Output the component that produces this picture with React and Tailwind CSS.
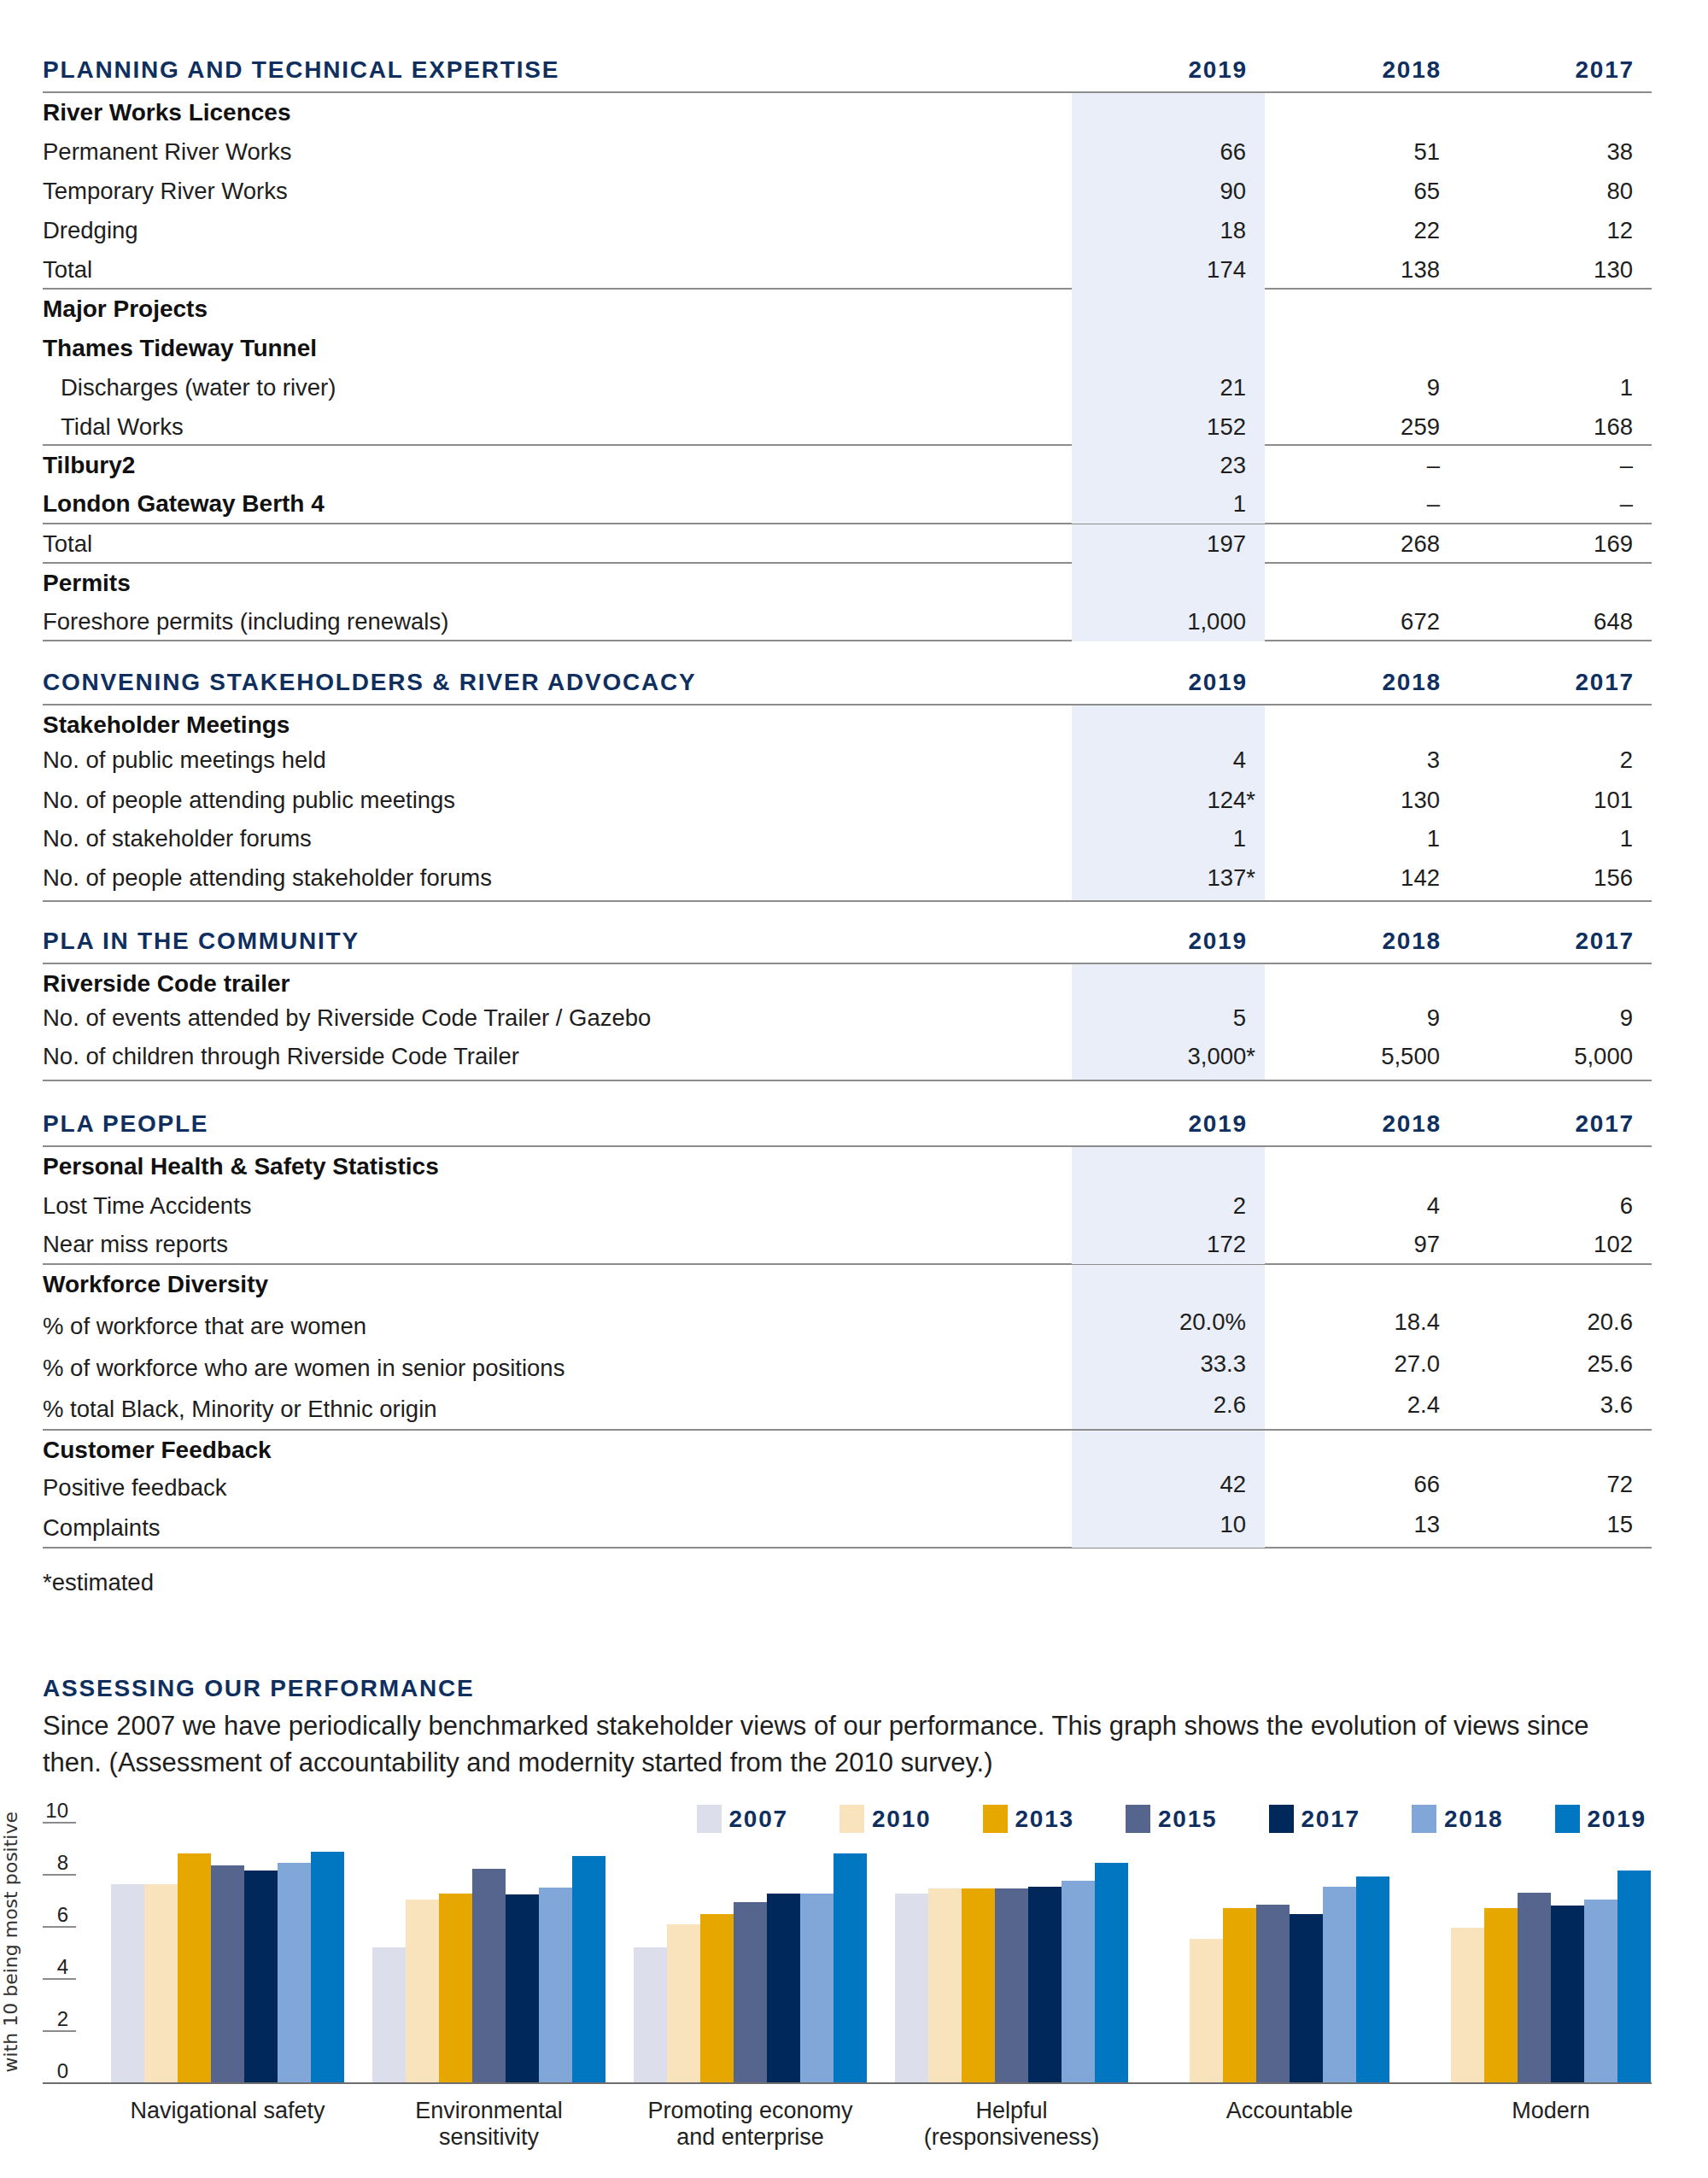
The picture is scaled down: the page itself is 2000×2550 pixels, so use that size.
import React from 'react';

const COLS = 'grid grid-cols-[1205px_226px_227px_226px]';

const sections = [
  {
    title: 'PLANNING AND TECHNICAL EXPERTISE',
    mt: '',
    groups: [
      [
        { label: 'River Works Licences', bold: true, h: 'h-[46px]' },
        { label: 'Permanent River Works', v: ['66', '51', '38'], h: 'h-[46px]' },
        { label: 'Temporary River Works', v: ['90', '65', '80'], h: 'h-[46px]' },
        { label: 'Dredging', v: ['18', '22', '12'], h: 'h-[46px]' },
        { label: 'Total', v: ['174', '138', '130'], h: 'h-[44px]' },
      ],
      [
        { label: 'Major Projects', bold: true, h: 'h-[46px]' },
        { label: 'Thames Tideway Tunnel', bold: true, h: 'h-[46px]' },
        { label: 'Discharges (water to river)', indent: true, v: ['21', '9', '1'], h: 'h-[46px]' },
        { label: 'Tidal Works', indent: true, v: ['152', '259', '168'], h: 'h-[43px]' },
      ],
      [
        { label: 'Tilbury2', bold: true, v: ['23', '–', '–'], h: 'h-[45px]' },
        { label: 'London Gateway Berth 4', bold: true, v: ['1', '–', '–'], h: 'h-[45px]' },
      ],
      [{ label: 'Total', v: ['197', '268', '169'], h: 'h-[44px]' }],
      [
        { label: 'Permits', bold: true, h: 'h-[45px]' },
        { label: 'Foreshore permits (including renewals)', v: ['1,000', '672', '648'], h: 'h-[44px]' },
      ],
    ],
  },
  {
    title: 'CONVENING STAKEHOLDERS & RIVER ADVOCACY',
    mt: 'mt-[34px]',
    groups: [
      [
        { label: 'Stakeholder Meetings', bold: true, h: 'h-[41px]' },
        { label: 'No. of public meetings held', v: ['4', '3', '2'], h: 'h-[47px]' },
        { label: 'No. of people attending public meetings', v: ['124*', '130', '101'], h: 'h-[45px]' },
        { label: 'No. of stakeholder forums', v: ['1', '1', '1'], h: 'h-[46px]' },
        { label: 'No. of people attending stakeholder forums', v: ['137*', '142', '156'], h: 'h-[49px]' },
      ],
    ],
  },
  {
    title: 'PLA IN THE COMMUNITY',
    mt: 'mt-[32px]',
    groups: [
      [
        { label: 'Riverside Code trailer', bold: true, h: 'h-[40px]' },
        { label: 'No. of events attended by Riverside Code Trailer / Gazebo', v: ['5', '9', '9'], h: 'h-[45px]' },
        { label: 'No. of children through Riverside Code Trailer', v: ['3,000*', '5,500', '5,000'], h: 'h-[50px]' },
      ],
    ],
  },
  {
    title: 'PLA PEOPLE',
    mt: 'mt-[36px]',
    groups: [
      [
        { label: 'Personal Health & Safety Statistics', bold: true, h: 'h-[46px]' },
        { label: 'Lost Time Accidents', v: ['2', '4', '6'], h: 'h-[45px]' },
        { label: 'Near miss reports', v: ['172', '97', '102'], h: 'h-[45px]' },
      ],
      [
        { label: 'Workforce Diversity', bold: true, h: 'h-[49px]' },
        { label: '% of workforce that are women', v: ['20.0%', '18.4', '20.6'], h: 'h-[49px]', vl: 'leading-[36px]' },
        { label: '% of workforce who are women in senior positions', v: ['33.3', '27.0', '25.6'], h: 'h-[48px]', vl: 'leading-[36px]' },
        { label: '% total Black, Minority or Ethnic origin', v: ['2.6', '2.4', '3.6'], h: 'h-[46px]', vl: 'leading-[36px]' },
      ],
      [
        { label: 'Customer Feedback', bold: true, h: 'h-[44px]' },
        { label: 'Positive feedback', v: ['42', '66', '72'], h: 'h-[47px]', vl: 'leading-[38px]' },
        { label: 'Complaints', v: ['10', '13', '15'], h: 'h-[45px]', vl: 'leading-[38px]' },
      ],
    ],
  },
];

const series = [
  { year: '2007', color: 'bg-[#dcdfeb]' },
  { year: '2010', color: 'bg-[#f9e3bc]' },
  { year: '2013', color: 'bg-[#e6a800]' },
  { year: '2015', color: 'bg-[#56658e]' },
  { year: '2017', color: 'bg-[#00285a]' },
  { year: '2018', color: 'bg-[#80a7d8]' },
  { year: '2019', color: 'bg-[#0077c0]' },
];

// values read off the survey chart, 0-10 scale; null = not assessed that year
const chartGroups = [
  { label: ['Navigational safety'], v: [7.62, 7.62, 8.8, 8.33, 8.14, 8.43, 8.88] },
  { label: ['Environmental', 'sensitivity'], v: [5.18, 7.04, 7.26, 8.23, 7.23, 7.48, 8.72] },
  { label: ['Promoting economy', 'and enterprise'], v: [5.18, 6.09, 6.48, 6.93, 7.25, 7.26, 8.82] },
  { label: ['Helpful', '(responsiveness)'], v: [7.25, 7.45, 7.45, 7.45, 7.51, 7.75, 8.43] },
  { label: ['Accountable'], v: [null, 5.53, 6.69, 6.83, 6.48, 7.51, 7.93] },
  { label: ['Modern'], v: [null, 5.95, 6.69, 7.29, 6.8, 7.04, 8.16] },
];

const Value = ({ v }) => {
  if (v.endsWith('*')) {
    return (
      <span>
        {v.slice(0, -1)}
        <span className="-mr-[11px]">*</span>
      </span>
    );
  }
  return <span>{v}</span>;
};

const Row = ({ row }) => {
  const vals = row.v || ['', '', ''];
  return (
    <div className={`${COLS} ${row.h}`}>
      <div
        className={`leading-[46px] whitespace-nowrap ${row.bold ? 'font-bold text-[28px] text-[#111]' : 'text-[27.5px]'} ${row.indent ? 'pl-[21px]' : ''}`}
      >
        {row.label}
      </div>
      {vals.map((v, i) => (
        <div
          key={i}
          className={`pr-[22px] text-right text-[27.5px] ${row.vl || 'leading-[46px]'} ${i === 0 ? 'bg-[#e9eef8]' : ''}`}
        >
          <Value v={v} />
        </div>
      ))}
    </div>
  );
};

const Section = ({ section }) => (
  <div className={section.mt}>
    <div className={`${COLS} border-b-2 border-[#8c8c8c] pb-[11px] text-[28px] leading-[28px] font-bold tracking-[1.8px] text-[#0f2f5f]`}>
      <div className="whitespace-nowrap">{section.title}</div>
      <div className="text-right pr-[20px]">2019</div>
      <div className="text-right pr-[20px]">2018</div>
      <div className="text-right pr-[20px]">2017</div>
    </div>
    {section.groups.map((g, gi) => (
      <div key={gi} className="border-b-2 border-[#8c8c8c]">
        {g.map((row, ri) => (
          <Row key={ri} row={row} />
        ))}
      </div>
    ))}
  </div>
);

const PerformanceChart = () => {
  const ticks = ['8', '6', '4', '2'];
  return (
    <div className="mt-[23px] -ml-[50px]">
      <div className="flex">
        {/* rotated axis title */}
        <div className="w-[50px] flex items-center">
          <span className="[writing-mode:vertical-rl] rotate-180 font-['DejaVu_Sans',sans-serif] text-[22px] leading-[25px] text-[#333] whitespace-nowrap">
            with 10 being most positive
          </span>
        </div>

        <div className="flex-1 flex border-b-2 border-[#6e6e6e]">
          {/* y axis */}
          <div className="w-[80px] flex flex-col text-[24px] leading-[24px] text-[#222]">
            <div className="w-[39px] h-[27px] border-b-2 border-[#8c8c8c] flex items-end justify-end pr-[9px] pb-[1px]">10</div>
            {ticks.map((t) => (
              <div key={t} className="w-[39px] h-[61px] border-b-2 border-[#8c8c8c] flex items-end justify-end pr-[9px] pb-[1px]">
                {t}
              </div>
            ))}
            <div className="w-[39px] h-[59px] flex items-end justify-end pr-[9px] pb-[1px]">0</div>
          </div>

          {/* plot */}
          <div className="flex-1 flex flex-col">
            <div className="mt-[5px] h-[33px] flex justify-end gap-[60px] pr-[6px]">
              {series.map((s) => (
                <div key={s.year} className="flex items-center gap-[9px]">
                  <div className={`w-[29px] h-[33px] ${s.color}`}></div>
                  <span className="text-[28px] leading-[28px] font-bold tracking-[1.8px] text-[#0f2f5f]">{s.year}</span>
                </div>
              ))}
            </div>
            <div className="flex-1 flex items-end gap-[33px]">
              {chartGroups.map((g, gi) => (
                <div key={gi} className="w-[273px] flex items-end">
                  {g.v.map((val, vi) => (
                    <div
                      key={vi}
                      className={`w-[39px] ${val ? series[vi].color : ''}`}
                      style={{ height: val ? `${(val * 30.44).toFixed(1)}px` : 0 }}
                    ></div>
                  ))}
                </div>
              ))}
            </div>
          </div>
        </div>
      </div>

      {/* category labels, centred under the bars that are drawn */}
      <div className="flex gap-[33px] pl-[130px] mt-[16px] text-[27px] leading-[31px] text-[#222]">
        {chartGroups.map((g, gi) => (
          <div key={gi} className={`w-[273px] text-center ${g.v[0] === null ? 'pl-[39px]' : ''}`}>
            {g.label.map((l, li) => (
              <div key={li}>{l}</div>
            ))}
          </div>
        ))}
      </div>
    </div>
  );
};

const App = () => {
  return (
    <div className="w-[2000px] min-h-[2550px] bg-white pt-[68px] pl-[50px] font-['Liberation_Sans',Arial,sans-serif] text-[#1e1e1e]">
      <div className="w-[1884px]">
        {sections.map((s, i) => (
          <Section key={i} section={s} />
        ))}

        <div className="mt-[17px] text-[27.5px] leading-[46px]">*estimated</div>

        <h2 className="mt-[87px] text-[28px] leading-[28px] font-bold tracking-[1.8px] text-[#0f2f5f]">
          ASSESSING OUR PERFORMANCE
        </h2>
        <p className="mt-[8px] max-w-[1860px] text-[31px] leading-[43px]">
          Since 2007 we have periodically benchmarked stakeholder views of our performance. This graph shows the evolution of views since then. (Assessment of accountability and modernity started from the 2010 survey.)
        </p>

        <PerformanceChart />
      </div>
    </div>
  );
};

export default App;
